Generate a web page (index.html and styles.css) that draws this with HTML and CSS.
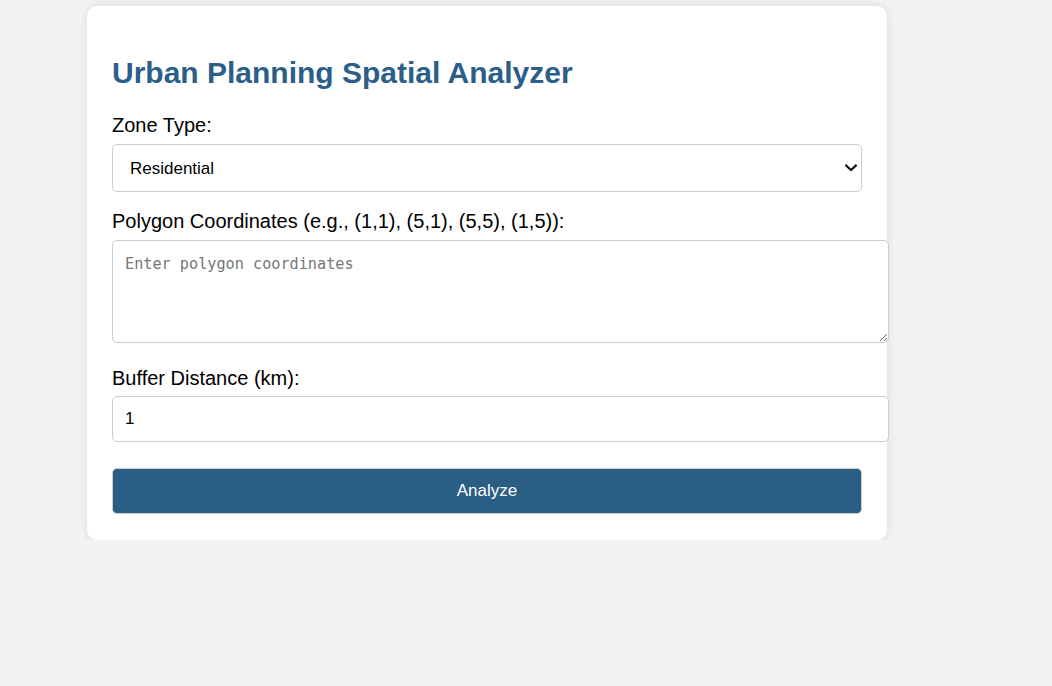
FILE: index.html
```html
<!DOCTYPE html>
<html lang="en">
<head>
<meta charset="utf-8">
<title>Urban Planning Spatial Analyzer</title>
<link rel="stylesheet" href="styles.css">
</head>
<body>
<div class="card">
  <h1 class="title">Urban Planning Spatial Analyzer</h1>
  <div class="group group-select">
    <label class="label" for="zone">Zone Type:</label>
    <div class="select-wrap">
      <select id="zone" class="select">
        <option>Residential</option>
        <option>Commercial</option>
        <option>Industrial</option>
      </select>
      <svg class="chevron" width="12" height="8" viewBox="0 0 12 8" aria-hidden="true">
        <path d="M1.2 1.5 L6 6 L10.8 1.5" fill="none" stroke="#111" stroke-width="2.2" stroke-linecap="square"/>
      </svg>
    </div>
  </div>
  <div class="group group-area">
    <label class="label" for="coords">Polygon Coordinates (e.g., (1,1), (5,1), (5,5), (1,5)):</label>
    <textarea id="coords" class="area" placeholder="Enter polygon coordinates"></textarea>
  </div>
  <div class="group group-input">
    <label class="label label-tight" for="buffer">Buffer Distance (km):</label>
    <input id="buffer" class="field" type="number" value="1">
  </div>
  <button class="btn" type="button">Analyze</button>
</div>
</body>
</html>
```

FILE: styles.css
```css
html, body {
  margin: 0;
  padding: 0;
  background: #f2f2f2;
  font-family: "Liberation Sans", Arial, sans-serif;
}

.card {
  margin: 6px 0 0 87px;
  width: 750px;
  padding: 30px 25px 26px;
  background: #ffffff;
  border-radius: 10px;
  box-shadow: 0 0 10px rgba(0, 0, 0, 0.1);
}

.title {
  margin: 20px 0 24px;
  font-size: 30px;
  line-height: 34px;
  font-weight: bold;
  color: #2b5f8a;
}

.group-select { margin-bottom: 18px; }
.group-area { margin-bottom: 24px; }
.group-input { margin-bottom: 26px; }

.label {
  display: block;
  font-size: 20px;
  line-height: 23px;
  color: #000;
  margin-bottom: 7px;
}
.label-tight { margin-bottom: 6px; }

.select-wrap {
  position: relative;
}

.select {
  display: block;
  box-sizing: border-box;
  width: 100%;
  height: 48px;
  padding: 12px 12px 12px 17px;
  border: 1px solid #cccccc;
  border-radius: 5px;
  background: #ffffff;
  font-family: "Liberation Sans", Arial, sans-serif;
  font-size: 17px;
  color: #000;
  -webkit-appearance: none;
  appearance: none;
}

.chevron {
  position: absolute;
  right: 5px;
  top: 20px;
  pointer-events: none;
}

.area {
  display: block;
  width: 100%;
  height: 75px;
  padding: 14px 13px 12px 12px;
  margin: 0;
  border: 1px solid #cccccc;
  border-radius: 5px;
  font-family: "DejaVu Sans Mono", monospace;
  font-size: 15.2px;
  color: #000;
  resize: both;
}
.area::placeholder { color: #767676; }

.field {
  display: block;
  width: 100%;
  height: 20px;
  padding: 12px 13px 12px 12px;
  margin: 0;
  border: 1px solid #cccccc;
  border-radius: 5px;
  font-family: "Liberation Sans", Arial, sans-serif;
  font-size: 17px;
  color: #000;
}

.btn {
  display: block;
  box-sizing: border-box;
  width: 100%;
  height: 46px;
  border: 1px solid #cccccc;
  border-radius: 5px;
  background: #2a5d84;
  color: #ffffff;
  font-family: "Liberation Sans", Arial, sans-serif;
  font-size: 17px;
  cursor: pointer;
}
```
